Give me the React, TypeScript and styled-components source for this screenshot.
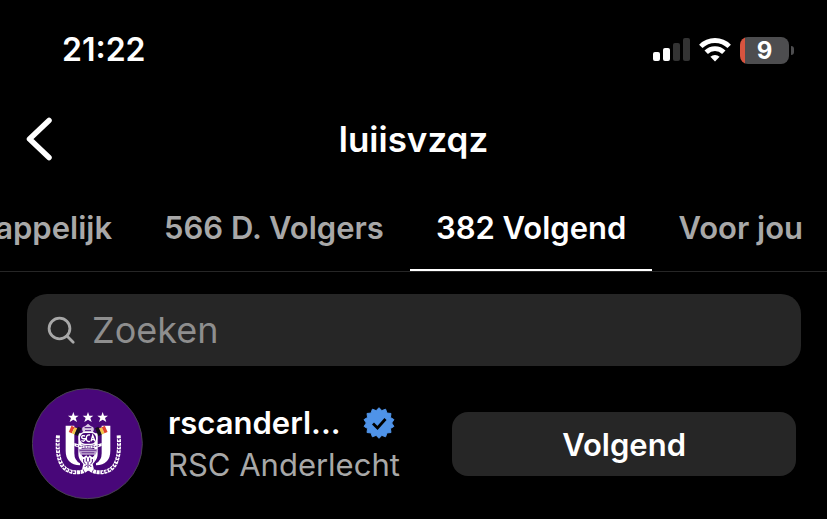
import React from "react";
import styled, { createGlobalStyle } from "styled-components";

const GlobalStyle = createGlobalStyle`
  * { box-sizing: border-box; }
  body {
    margin: 0;
    background: #000;
    color: #fff;
    font-family: Inter, "Liberation Sans", sans-serif;
  }
  button, input { font: inherit; color: inherit; }
`;

const Screen = styled.main`
  overflow: hidden;
  padding-bottom: 19px;
`;

const StatusBar = styled.div`
  display: flex;
  align-items: center;
  justify-content: space-between;
  height: 100px;
  padding: 0 33px 0 62px;
`;

const Clock = styled.time`
  font-size: 32px;
  line-height: 40px;
  font-weight: 600;
`;

const StatusIcons = styled.div`
  display: flex;
  align-items: center;
  gap: 9px;
`;

const BatteryWrap = styled.div`
  display: flex;
  align-items: center;
  gap: 2px;
`;

const Battery = styled.div`
  display: flex;
  align-items: center;
  justify-content: center;
  width: 49px;
  height: 27px;
  border-radius: 8px;
  background: linear-gradient(90deg, #d8543f 5px, #4d4d4f 5px);
  font-size: 24px;
  line-height: 27px;
  font-weight: 700;
`;

const BatteryTip = styled.div`
  width: 3px;
  height: 9px;
  border-radius: 0 5px 5px 0;
  background: #4d4d4f;
`;

const Header = styled.header`
  display: grid;
  grid-template-columns: 64px 1fr 64px;
  align-items: center;
  height: 78px;
`;

const BackButton = styled.button`
  display: flex;
  padding: 0 0 0 24px;
  border: 0;
  background: none;
`;

const Title = styled.h1`
  margin: 0;
  text-align: center;
  font-size: 35px;
  line-height: 44px;
  font-weight: 600;
`;

const Tabs = styled.nav`
  display: flex;
  justify-content: flex-end;
  height: 94px;
  margin-right: -2px;
  border-bottom: 1px solid #262626;
`;

const Tab = styled.a<{ $active?: boolean }>`
  flex: none;
  height: 93px;
  padding: 30px 26px 0;
  border-bottom: 2px solid ${(p) => (p.$active ? "#fff" : "transparent")};
  color: ${(p) => (p.$active ? "#fff" : "#a8a8a8")};
  font-size: 31px;
  line-height: 40px;
  font-weight: 600;
  text-decoration: none;
  white-space: nowrap;
`;

const SearchBox = styled.label`
  display: flex;
  align-items: center;
  gap: 16px;
  height: 72px;
  margin: 22px 26px 22px 27px;
  padding: 0 20px;
  border-radius: 20px;
  background: #262626;
`;

const SearchInput = styled.input`
  flex: 1;
  min-width: 0;
  padding: 0;
  border: 0;
  outline: 0;
  background: none;
  font-size: 36px;
  line-height: 44px;
  &::placeholder { color: #8e8e8e; opacity: 1; }
`;

const UserRow = styled.article`
  display: flex;
  align-items: center;
  padding: 0 31px 0 32px;
`;

const UserText = styled.div`
  flex: 1;
  min-width: 0;
  margin-left: 24px;
`;

const NameLine = styled.div`
  display: flex;
  align-items: center;
  gap: 22px;
`;

const Username = styled.a`
  color: #fff;
  font-size: 31px;
  line-height: 42px;
  font-weight: 600;
  text-decoration: none;
`;

const FullName = styled.div`
  color: #a8a8a8;
  font-size: 31px;
  line-height: 42px;
  white-space: nowrap;
`;

const FollowButton = styled.button`
  flex: none;
  width: 45%;
  height: 64px;
  border: 0;
  border-radius: 16px;
  background: #262626;
  font-size: 31px;
  font-weight: 600;
`;

const SignalIcon = () => (
  <svg width="37" height="24" viewBox="0 0 37 24" aria-hidden="true">
    <rect x="0" y="14" width="7" height="9" rx="2" fill="#fff" />
    <rect x="10" y="10" width="7" height="13" rx="2" fill="#fff" />
    <rect x="20" y="5" width="7" height="18" rx="2" fill="#333" />
    <rect x="30" y="0" width="7" height="23" rx="2" fill="#333" />
  </svg>
);

const WifiIcon = () => (
  <svg width="32" height="24" viewBox="0 0 32 24" fill="none" stroke="#fff" aria-hidden="true">
    <path d="M1.8 8.4a20 20 0 0 1 28.4 0" strokeWidth="4.8" />
    <path d="M7.2 14.2a12.4 12.4 0 0 1 17.6 0" strokeWidth="4.8" />
    <path d="M11.4 18.8a6.5 6.5 0 0 1 9.200 0L16 23.6Z" fill="#fff" stroke="none" />
  </svg>
);

const BackIcon = () => (
  <svg width="30" height="46" viewBox="0 0 30 46" fill="none" aria-hidden="true">
    <path d="M25 4.500 5.500 23 25 41.500" stroke="#fff" strokeWidth="5.500" strokeLinecap="round" strokeLinejoin="round" />
  </svg>
);

const SearchIcon = () => (
  <svg width="29" height="29" viewBox="0 0 29 29" fill="none" stroke="#a8a8a8" strokeWidth="2.800" strokeLinecap="round" aria-hidden="true">
    <circle cx="12.500" cy="12.500" r="10.400" />
    <path d="m20 20 6.200 6.200" />
  </svg>
);

const badgePoints = Array.from({ length: 28 }, (_, i) => {
  const angle = (i * Math.PI) / 14 - Math.PI / 2;
  const radius = i % 2 ? 12.7 : 15.3;
  return `${16 + radius * Math.cos(angle)},${16 + radius * Math.sin(angle)}`;
}).join(" ");

const VerifiedIcon = () => (
  <svg width="32" height="32" viewBox="0 0 32 32" role="img" aria-label="Geverifieerd">
    <polygon points={badgePoints} fill="#4f93e8" stroke="#4f93e8" strokeLinejoin="round" />
    <path d="m10 16.500 4.500 4.500 8-9" fill="none" stroke="#000" strokeWidth="2.800" />
  </svg>
);

const star = "m0-16 4 11h12l-9 7 4 12-11-7-11 7 4-12-9-7h12Z";

const ClubCrest = () => (
  <svg width="112" height="112" viewBox="21 24 336 336" role="img" aria-label="RSC Anderlecht">
    <circle cx="187" cy="191" r="165" fill="#480779" stroke="#47404f" strokeWidth="3" />
    <g fill="#fff">
      {[145, 189, 233].map((x) => (
        <path key={x} d={star} transform={`translate(${x} 112)`} />
      ))}
      <path d="M122 137h26v83q0 22 17 30v6q-43-2-43-44Z" />
      <path d="M256 137h-26v83q0 22-17 30v6q43-2 43-44Z" />
      <path d="M160 160h10v85q-10-8-10-24ZM218 160h-10v85q10-8 10-24Z" />
    </g>
    <g fill="none" stroke="#fff">
      <path d="M99 166C94 234 106 274 151 277q24 1 34-10" strokeWidth="12" strokeDasharray="9 2" />
      <path d="M281 166c5 68-7 108-52 111q-24 1-34-10" strokeWidth="12" strokeDasharray="9 2" />
      <g stroke="#480779" strokeWidth="4">
        <path d="M99 176C96 234 106 272 151 277" strokeDasharray="5 6" />
        <path d="M281 176c3 58-7 96-52 101" strokeDasharray="5 6" />
      </g>
    </g>
    <path d="M172 151q-3-10 8-12l9-8 9 8q11 2 8 12l-4 10h-26Z" fill="#d9c9e2" />
    <path d="M179 143h20M180 152h18" stroke="#480779" strokeWidth="3" />
    <rect x="163" y="157" width="52" height="36" rx="17" fill="#480779" stroke="#fff" strokeWidth="4" />
    <g fill="none" stroke="#fff" strokeWidth="4">
      <path d="M180 168q-10-3-10 3t8 5-2 8l-7-2M195 165q-11-2-11 10t11 9M198 184l5-18 7 18M199 179h9" />
    </g>
    <path d="M148 189q41 17 82 0v9l-8 3q-33 9-66 0l-8-3Z" fill="#fff" />
    <path d="M154 196q35 11 70 0" fill="none" stroke="#480779" strokeWidth="3" strokeDasharray="5 3" />
    <path d="M158 207h62l-9 17h-44Z" fill="#bda2cf" />
    <path d="M164 211h50M170 218h38" stroke="#480779" strokeWidth="2" />
    <path d="m168 225 8 7 8-6 5 6 5-6 8 6 8-7-1 20-6 7 4 17-9-3-9 8-9-8-9 3 4-17-6-7Z" fill="#fff" />
    <g fill="none" stroke="#480779" strokeWidth="3">
      <path d="M176 237v9l6 7M202 237v9l-6 7M184 233v12M194 233v12M189 244v19M179 261l6-6M199 261l-6-6" />
    </g>
    <g transform="rotate(24 150 153)">
      <path d="M134 143h10v20h-10z" fill="#e2402f" />
      <path d="M144 143h9v20h-9z" fill="#f2c848" />
      <path d="M153 138h11v25h-11z" fill="#17101b" />
    </g>
    <g transform="rotate(-24 229 153)">
      <path d="M215 138h11v25h-11z" fill="#17101b" />
      <path d="M226 143h9v20h-9z" fill="#f2c848" />
      <path d="M235 143h10v20h-10z" fill="#e2402f" />
    </g>
  </svg>
);

export default function App() {
  return (
    <>
      <GlobalStyle />
      <Screen>
        <StatusBar>
          <Clock>21:22</Clock>
          <StatusIcons>
            <SignalIcon />
            <WifiIcon />
            <BatteryWrap>
              <Battery>9</Battery>
              <BatteryTip />
            </BatteryWrap>
          </StatusIcons>
        </StatusBar>
        <Header>
          <BackButton type="button" aria-label="Terug">
            <BackIcon />
          </BackButton>
          <Title>luiisvzqz</Title>
        </Header>
        <Tabs>
          <Tab href="#mutual">appelijk</Tab>
          <Tab href="#followers">566 D. Volgers</Tab>
          <Tab href="#following" $active aria-current="page">382 Volgend</Tab>
          <Tab href="#suggested">Voor jou</Tab>
        </Tabs>
        <SearchBox>
          <SearchIcon />
          <SearchInput type="search" placeholder="Zoeken" aria-label="Zoeken" />
        </SearchBox>
        <UserRow>
          <ClubCrest />
          <UserText>
            <NameLine>
              <Username href="#rscanderlecht">rscanderl...</Username>
              <VerifiedIcon />
            </NameLine>
            <FullName>RSC Anderlecht</FullName>
          </UserText>
          <FollowButton type="button">Volgend</FollowButton>
        </UserRow>
      </Screen>
    </>
  );
}
